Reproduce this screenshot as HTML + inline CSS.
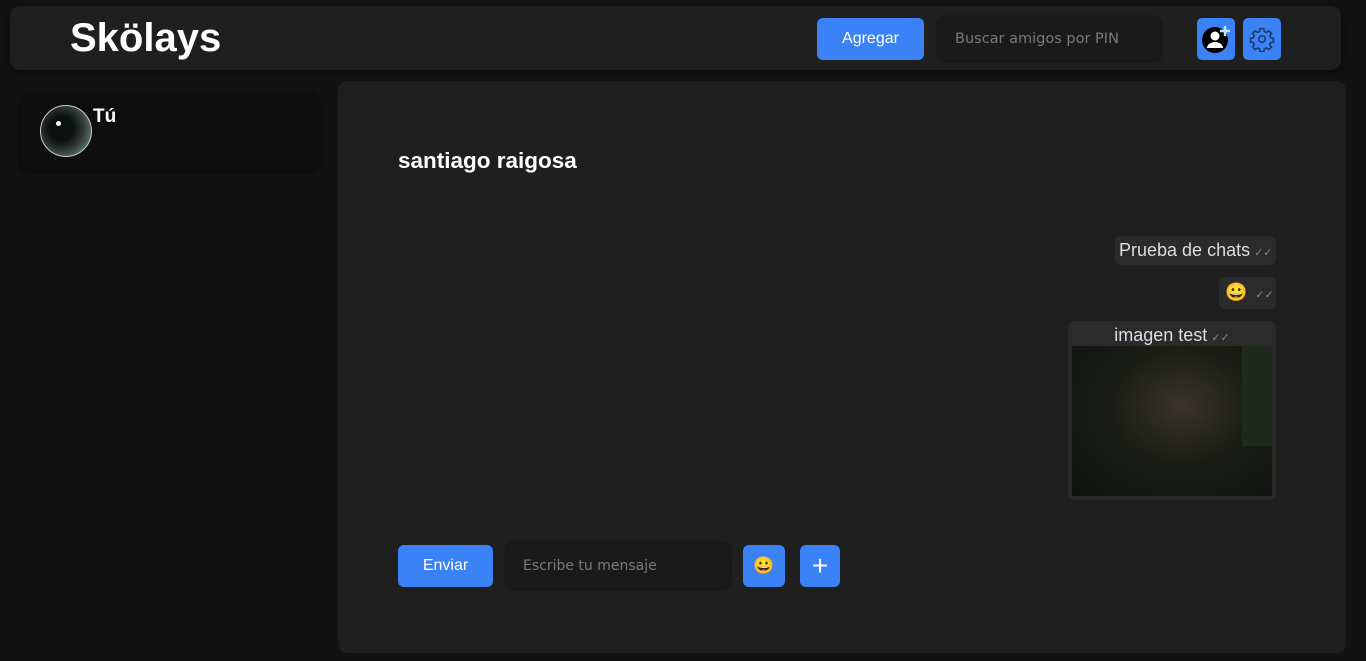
<!DOCTYPE html>
<html><head><meta charset="utf-8"><style>
*{box-sizing:border-box;margin:0;padding:0}
body{width:1366px;height:661px;background:#121212;font-family:"Liberation Sans",sans-serif;position:relative;overflow:hidden;color:#fff}
.hdr{position:absolute;left:10px;top:6px;width:1331px;height:64px;background:#1f1f1f;border-radius:10px;box-shadow:0 2px 6px rgba(0,0,0,.5)}
.logo{position:absolute;left:70px;top:16px;font-size:40px;font-weight:bold}
.btn{position:absolute;background:#3b82f6;border-radius:6px;color:#fff;font-size:16px;display:flex;align-items:center;justify-content:center}
.inp{position:absolute;background:#1a1a1a;border-radius:8px;color:#7a7a7a;font-size:14px;font-family:"DejaVu Sans",sans-serif;display:flex;align-items:center;box-shadow:0 0 3px rgba(0,0,0,.6)}
.side{position:absolute;left:20px;top:92px;width:298px;height:78px;background:#0e0e0e;border-radius:10px;box-shadow:0 2px 6px rgba(0,0,0,.6)}
.main{position:absolute;left:338px;top:81px;width:1008px;height:572px;background:#1f1f1f;border-radius:10px}
.msg{position:absolute;background:#2b2b2b;border-radius:6px;color:#ddd;font-size:18px;white-space:nowrap}
.ck{color:#888;font-size:11px;margin-left:4px;font-family:"DejaVu Sans",sans-serif}
</style></head><body>
<div class="hdr"></div>
<div class="logo">Skölays</div>
<div class="btn" style="left:817px;top:18px;width:107px;height:42px">Agregar</div>
<div class="inp" style="left:938px;top:17px;width:223px;height:44px;padding-left:17px;font-size:14.5px">Buscar amigos por PIN</div>
<div class="btn" style="left:1197px;top:18px;width:38px;height:42px;border-radius:5px">
<svg width="30" height="30" viewBox="0 0 30 30"><circle cx="14" cy="16" r="13" fill="#000"/><circle cx="14" cy="12" r="4.5" fill="#fff"/><path d="M6 24a8 6 0 0 1 16 0z" fill="#fff"/><path d="M24 2v10M19 7h10" stroke="#bfe9ff" stroke-width="2.5"/></svg></div>
<div class="btn" style="left:1243px;top:18px;width:38px;height:42px;border-radius:5px">
<svg width="26" height="26" viewBox="0 0 24 24" fill="none" stroke="#1e3a6a" stroke-width="1.5"><circle cx="12" cy="12" r="3"/><path d="M10.3 2.5h3.4l.5 2.6 1.9.8 2.2-1.5 2.4 2.4-1.5 2.2.8 1.9 2.6.5v3.4l-2.6.5-.8 1.9 1.5 2.2-2.4 2.4-2.2-1.5-1.9.8-.5 2.6h-3.4l-.5-2.6-1.9-.8-2.2 1.5-2.4-2.4 1.5-2.2-.8-1.9-2.6-.5v-3.4l2.6-.5.8-1.9-1.5-2.2 2.4-2.4 2.2 1.5 1.9-.8z"/></svg></div>
<div class="side">
<div style="position:absolute;left:20px;top:13px;width:52px;height:52px;border-radius:50%;border:1px solid #ccc;background:radial-gradient(circle at 40% 45%,#0c1010 0 30%,#2e3a38 55%,#6f7f7b 85%)"><div style="position:absolute;left:15px;top:15px;width:5px;height:5px;border-radius:50%;background:#fff"></div></div>
<div style="position:absolute;left:73px;top:14px;font-weight:bold;font-size:19px">Tú</div>
</div>
<div class="main">
<div style="position:absolute;left:60px;top:67px;font-size:22.5px;font-weight:bold">santiago raigosa</div>
<div class="msg" style="left:777px;top:155px;width:161px;height:29px;padding:4px 0 0 4px">Prueba de chats<span class="ck">✓✓</span></div>
<div class="msg" style="left:881px;top:196px;width:57px;height:32px;padding:5px 0 0 6px">😀<span class="ck" style="margin-left:8px">✓✓</span></div>
<div class="msg" style="left:730px;top:240px;width:208px;height:179px;text-align:center;padding-top:4px">imagen test<span class="ck">✓✓</span>
<div style="position:absolute;left:4px;top:25px;width:200px;height:150px;background:radial-gradient(ellipse at 55% 40%,#3a3428 0,#1a1d16 45%,#0f120e 100%)"><div style="position:absolute;right:0;top:0;width:30px;height:100px;background:#1d2a1c"></div></div></div>
<div class="btn" style="left:60px;top:464px;width:95px;height:42px">Enviar</div>
<div class="inp" style="left:168px;top:462px;width:224px;height:46px;padding-left:17px">Escribe tu mensaje</div>
<div class="btn" style="left:405px;top:464px;width:42px;height:42px;font-size:17px">😀</div>
<div class="btn" style="left:462px;top:464px;width:40px;height:42px;font-size:28px">+</div>
</div>
</body></html>
